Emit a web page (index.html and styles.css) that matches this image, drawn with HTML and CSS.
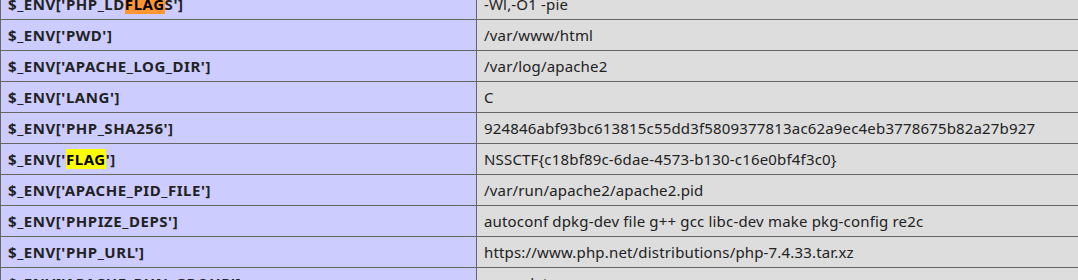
FILE: index.html
```html
<!DOCTYPE html>
<html>
<head>
<meta charset="utf-8">
<link rel="stylesheet" href="styles.css">
</head>
<body>
<table class="info">
<tr><td class="e">$_ENV['PHP_LD<mark class="cur">FLAG</mark>S']</td><td class="v">-Wl,-O1 -pie</td></tr>
<tr><td class="e">$_ENV['PWD']</td><td class="v">/var/www/html</td></tr>
<tr><td class="e">$_ENV['APACHE_LOG_DIR']</td><td class="v">/var/log/apache2</td></tr>
<tr><td class="e">$_ENV['LANG']</td><td class="v">C</td></tr>
<tr><td class="e">$_ENV['PHP_SHA256']</td><td class="v">924846abf93bc613815c55dd3f5809377813ac62a9ec4eb3778675b82a27b927</td></tr>
<tr><td class="e">$_ENV['<mark class="hit">FLAG</mark>']</td><td class="v">NSSCTF{c18bf89c-6dae-4573-b130-c16e0bf4f3c0}</td></tr>
<tr><td class="e">$_ENV['APACHE_PID_FILE']</td><td class="v">/var/run/apache2/apache2.pid</td></tr>
<tr><td class="e">$_ENV['PHPIZE_DEPS']</td><td class="v">autoconf dpkg-dev file g++ gcc libc-dev make pkg-config re2c</td></tr>
<tr><td class="e">$_ENV['PHP_URL']</td><td class="v">https://www.php.net/distributions/php-7.4.33.tar.xz</td></tr>
<tr><td class="e">$_ENV['APACHE_RUN_GROUP']</td><td class="v">www-data</td></tr>
</table>
</body>
</html>
```

FILE: styles.css
```css
html, body {
  margin: 0;
  padding: 0;
  overflow: hidden;
  background: #fff;
}
body {
  font-family: "Noto Sans", "Open Sans", sans-serif;
  color: #222;
  font-size: 15px;
}
.info {
  border-collapse: collapse;
  table-layout: fixed;
  width: 1300px;
  margin-top: -12px;
}
.info td {
  border: 1px solid #666;
  padding: 5px 7px;
  height: 20px;
  line-height: 20px;
  white-space: nowrap;
  vertical-align: baseline;
}
.e {
  background: #ccf;
  font-weight: bold;
  width: 461px;
  letter-spacing: 0.55px;
}
.v {
  background: #ddd;
  letter-spacing: 0.17px;
}
mark {
  color: #000;
}
mark.cur {
  background: #ff9632;
}
mark.hit {
  background: #ffff00;
}
```
